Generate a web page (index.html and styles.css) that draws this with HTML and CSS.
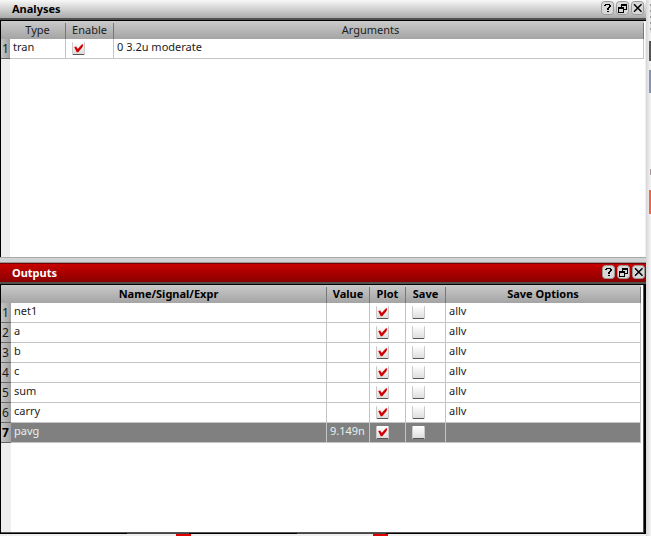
FILE: index.html
```html
<!DOCTYPE html>
<html lang="en">
<head>
<meta charset="utf-8">
<title>Analyses and Outputs</title>
<link rel="stylesheet" href="styles.css">
</head>
<body>
<svg class="defs" width="0" height="0">
  <defs>
    <linearGradient id="face" x1="0" y1="0" x2="0" y2="1"><stop offset="0" stop-color="#fff"/><stop offset="1" stop-color="#ddd"/></linearGradient>
    <symbol id="box" viewBox="0 0 13 13"><rect width="13" height="13" rx="1" fill="#c9c9c9"/><rect x="1" width="11" height="12" fill="url(#face)"/><path d="M1 12.5H12" stroke="#555"/></symbol>
    <symbol id="check" viewBox="0 0 13 13"><use href="#box"/><path d="M2.200 5L4.200 4.400L5.700 7L10 2.200L11.200 2.600L10.600 5L6.200 10.300H4.700Z" fill="#d40000"/></symbol>
    <symbol id="help" viewBox="0 0 13 14"><rect class="key" x=".5" y=".5" width="12" height="13" rx="3"/><path d="M4 3h5v1H4zM3 4h2v1H3zM8 4h2v2H8zM7 6h2v1H7zM6 7h2v2H6zM6 10h2v1H6z"/></symbol>
    <symbol id="float" viewBox="0 0 13 14"><rect class="key" x=".5" y=".5" width="12" height="13" rx="3"/><path d="M5 3h6v2H5zM10 5h1v4h-1zM8 8h2v1H8zM5 5h1v1H5z"/><path d="M2 6h6v2H2zM2 8h1v3H2zM7 8h1v3H7zM2 11h6v1H2z"/></symbol>
    <symbol id="close" viewBox="0 0 13 14"><rect class="key" x=".5" y=".5" width="12" height="13" rx="3"/><path d="M3 3.200L10.500 10.700M10.500 3.200L3 10.700" stroke="#000" stroke-width="1.500"/></symbol>
  </defs>
</svg>
<div class="app">
  <main class="window">
    <section class="pane analyses">
      <header class="title"><h2>Analyses</h2><div class="keys"><svg><use href="#help"/></svg><svg><use href="#float"/></svg><svg><use href="#close"/></svg></div></header>
      <div class="table">
        <div class="head"><span></span><span>Type</span><span>Enable</span><span class="wide">Arguments</span></div>
        <div class="row"><b>1</b><span>tran</span><span class="tick"><svg><use href="#check"/></svg></span><span>0 3.2u moderate</span></div>
        <div class="rest"></div>
      </div>
    </section>
    <div class="splitter"></div>
    <section class="pane outputs">
      <header class="title"><h2>Outputs</h2><div class="keys"><svg><use href="#help"/></svg><svg><use href="#float"/></svg><svg><use href="#close"/></svg></div></header>
      <div class="table">
        <div class="head"><span></span><span>Name/Signal/Expr</span><span>Value</span><span>Plot</span><span>Save</span><span>Save Options</span></div>
        <div class="row"><b>1</b><span>net1</span><span></span><span class="tick"><svg><use href="#check"/></svg></span><span class="tick"><svg><use href="#box"/></svg></span><span>allv</span></div>
        <div class="row"><b>2</b><span>a</span><span></span><span class="tick"><svg><use href="#check"/></svg></span><span class="tick"><svg><use href="#box"/></svg></span><span>allv</span></div>
        <div class="row"><b>3</b><span>b</span><span></span><span class="tick"><svg><use href="#check"/></svg></span><span class="tick"><svg><use href="#box"/></svg></span><span>allv</span></div>
        <div class="row"><b>4</b><span>c</span><span></span><span class="tick"><svg><use href="#check"/></svg></span><span class="tick"><svg><use href="#box"/></svg></span><span>allv</span></div>
        <div class="row"><b>5</b><span>sum</span><span></span><span class="tick"><svg><use href="#check"/></svg></span><span class="tick"><svg><use href="#box"/></svg></span><span>allv</span></div>
        <div class="row"><b>6</b><span>carry</span><span></span><span class="tick"><svg><use href="#check"/></svg></span><span class="tick"><svg><use href="#box"/></svg></span><span>allv</span></div>
        <div class="row selected"><b>7</b><span>pavg</span><span>9.149n</span><span class="tick"><svg><use href="#check"/></svg></span><span class="tick"><svg><use href="#box"/></svg></span><span></span></div>
        <div class="rest"></div>
      </div>
      <div class="edge"></div>
    </section>
    <footer class="below"><i></i><i></i></footer>
  </main>
  <aside class="behind"><i class="dots"></i><i class="dark"></i><i class="blue"></i><i class="mauve"></i><i class="orange"></i></aside>
</div>
</body>
</html>
```

FILE: styles.css
```css
* { box-sizing: border-box; }
body { margin: 0; width: 651px; height: 536px; overflow: hidden; background: #ececec; font: 11px/18px "Noto Sans", "Open Sans", sans-serif; color: #1c1c1c; }
.defs { position: absolute; }
.app { display: flex; height: 536px; }
.window { width: 646px; display: flex; flex-direction: column; }
.pane { display: flex; flex-direction: column; }
.analyses { height: 257px; }
.outputs { height: 271px; }
.title { height: 21px; flex: none; display: flex; justify-content: space-between; padding: 0 2px 0 12px; border-bottom: 1px solid #000; box-shadow: inset 0 -2px #505050; background: linear-gradient(#f8f8f8, #aaa 18px); color: #000; }
.outputs .title { height: 22px; padding-right: 1px; color: #fff; background: linear-gradient(#700 0 1px, #c80000 1px, #8a0000 19px); }
h2 { margin: 0; font-size: 11px; line-height: 18px; }
.outputs h2 { line-height: 20px; }
.keys { display: flex; gap: 2px; padding-top: 1px; }
.outputs .keys { padding-top: 2px; }
.keys svg { width: 13px; height: 14px; color: #000; }
.key { fill: #d8d8d8; stroke: #999; }
.outputs .key { fill: #eee; stroke: #ddd; }
.table { flex: 1; display: flex; flex-direction: column; background: #fff; border-left: 1px solid #000; }
.analyses .table { border-right: 1px solid #eee; }
.outputs .table { border-right: 2px solid #000; box-shadow: inset -1px -1px #555; }
.head, .row { display: grid; flex: none; grid-template-rows: 100%; }
.analyses .head, .analyses .row { width: 643px; grid-template-columns: 9px 56px 48px 1fr; }
.outputs .head, .outputs .row { width: 640px; grid-template-columns: 10px 316px 43px 36px 40px 1fr; }
.head { height: 18px; background: linear-gradient(#cacaca, #a4a4a4); text-align: center; }
.outputs .head { font-weight: 700; color: #000; }
.head span + span { border-right: 1px solid #777; margin-top: 2px; line-height: 13px; }
.head .wide { padding-right: 16px; }
.row { height: 20px; }
.row span { border-right: 1px solid #c4c4c4; border-bottom: 1px solid #c4c4c4; padding-left: 3px; line-height: 15px; white-space: nowrap; }
.row b { font-weight: 400; font-size: 12px; line-height: 20px; background: linear-gradient(90deg, #c6c6c6, #a0a0a0); border-bottom: 1px solid #666; padding-left: 1px; }
.row .tick { padding: 3px 0 0 6px; }
.tick svg { display: block; width: 13px; height: 13px; }
.selected span { background: #808080; color: #e4f0f0; }
.row.selected b { font-weight: 700; color: #000; }
.rest { flex: 1; width: 9px; background: #eee; }
.outputs .rest { width: 10px; margin-bottom: 1px; }
.splitter { height: 6px; background: #d0d2d5; border-top: 1px solid #aaa; border-bottom: 1px solid #999; }
.edge { height: 1px; background: linear-gradient(90deg, #000 127px, #444 127px 189px, #000 189px 297px, #444 297px 386px, #000 386px); }
.below { height: 2px; display: flex; gap: 182px; padding-left: 176px; background: #eee; }
.below i { width: 15px; background: #e00000; }
.behind { width: 5px; display: flex; flex-direction: column; align-items: flex-end; background: linear-gradient(90deg, #d6d6d6, #f0f0f0 80%); }
.behind i { width: 2px; flex: none; }
.behind .dots { width: 1px; height: 29px; margin-top: 4px; background: repeating-linear-gradient(#999 0 2px, #ddd 2px 6px); }
.behind .dark { margin-top: 8px; height: 20px; background: #555; }
.behind .blue { margin-top: 9px; height: 23px; background: #8296b4; }
.behind .mauve { width: 1px; margin-top: 76px; height: 6px; background: #a8929c; }
.behind .orange { margin-top: 15px; height: 24px; background: #f06448; }
```
